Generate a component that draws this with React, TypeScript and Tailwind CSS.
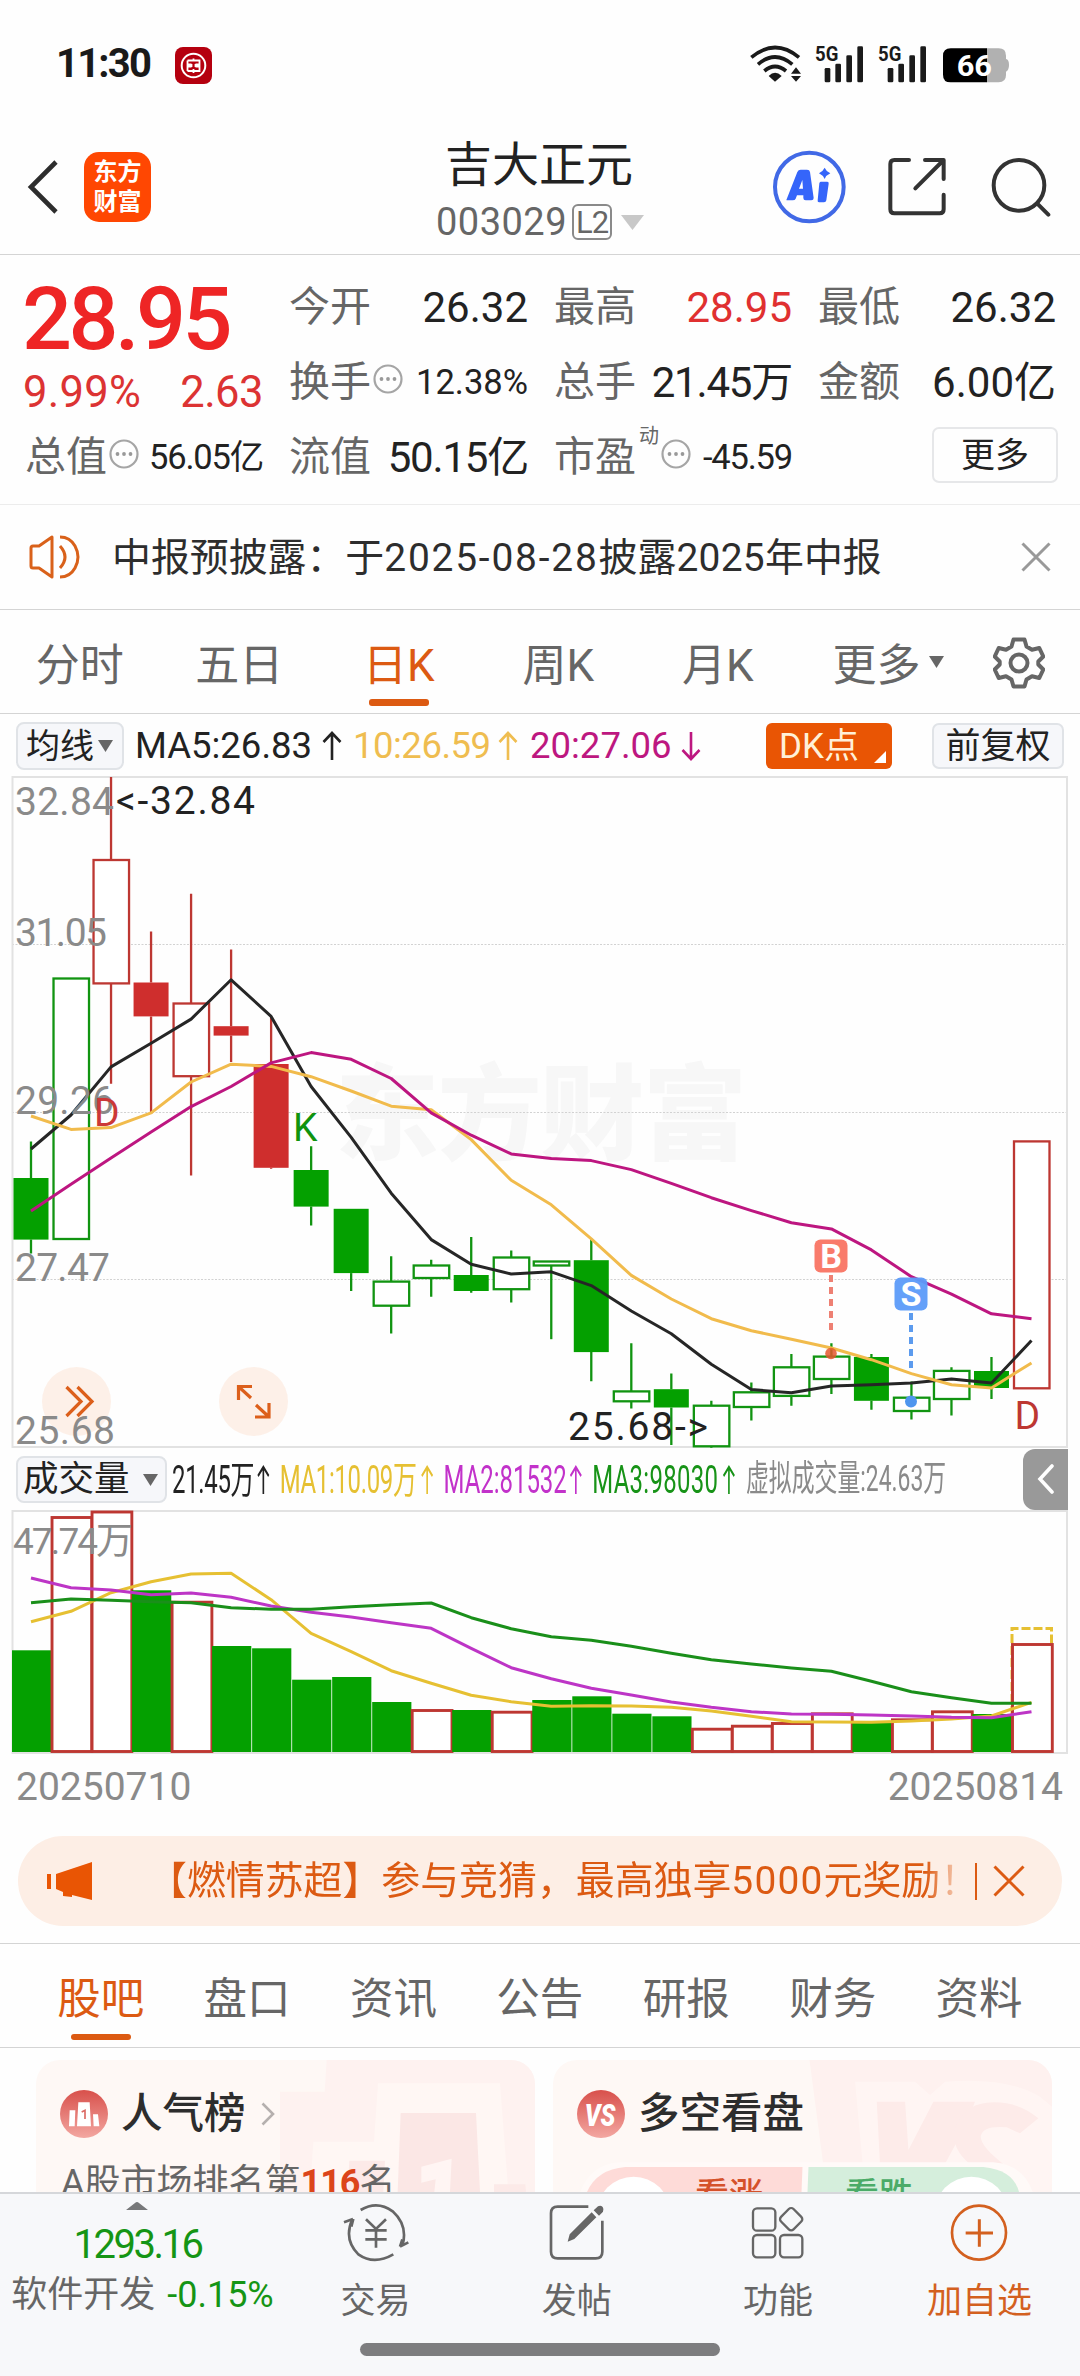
import { ReactNode } from "react";

type Candle = [high: number, top: number, bottom: number, low: number, kind: string];

// high, body top, body bottom, low ("g" green, "r" red, upper case = filled)
const candles: Candle[] = [
  [371.4, 408, 469.6, 483.5, "G"],
  [208.5, 208.5, 469, 469, "g"],
  [7, 90, 213.4, 313.8, "r"],
  [161.6, 212.5, 246.4, 344, "R"],
  [123.7, 233.5, 306.2, 405.5, "r"],
  [179.5, 256.2, 265.6, 292, "R"],
  [246.4, 294, 397.8, 398.7, "R"],
  [376.3, 400, 436.6, 455.4, "G"],
  [438.8, 438.8, 503.1, 521, "G"],
  [486.2, 511.6, 535.7, 563.4, "g"],
  [489.7, 495.5, 508, 526.8, "g"],
  [467, 505, 521, 522.8, "G"],
  [480.4, 487.5, 519.2, 532.6, "g"],
  [491.5, 491.5, 495.5, 569.2, "g"],
  [468.8, 490.2, 582.1, 611.2, "G"],
  [573.2, 621.4, 631.3, 638.4, "g"],
  [603.6, 619.2, 637.5, 675, "G"],
  [630.8, 635.7, 676.3, 677.7, "g"],
  [612.5, 622.3, 637, 650.4, "g"],
  [584, 597.3, 625.9, 635.7, "g"],
  [573.2, 586.6, 609, 624.1, "g"],
  [584, 587, 630.8, 639.7, "G"],
  [611.6, 627.7, 641, 649.6, "g"],
  [597.3, 600.9, 629, 645.5, "g"],
  [587, 601, 618, 629, "G"],
  [371.4, 371.4, 618.3, 618.3, "r"],
];
const ma5 = [379, 345, 296.9, 273.2, 249.1, 209.8, 246.4, 316.5, 367.4, 423.2, 469.6, 494.2, 504, 501.8, 515.6, 541, 563.8, 594.2, 619.6, 622.8, 616, 614.7, 613, 608.9, 613, 570.5];
const ma10 = [346, 359.4, 357.6, 342.9, 312, 294.2, 296.4, 306.7, 321, 336.2, 339.7, 369.6, 410.3, 434.8, 468.8, 505.4, 529, 548.7, 560.7, 569.2, 578, 589.7, 603.6, 614.7, 617.9, 592.9];
const ma20 = [441, 414.3, 388, 362, 336.6, 316.5, 292.9, 282.6, 289.3, 308.5, 342.9, 365.2, 383.9, 388.4, 390.6, 399.6, 413.4, 427.7, 440.6, 452.7, 458.9, 479.9, 506.7, 524.1, 543.8, 548.7];

const volumes = [140.3, 7, 1.5, 80.3, 91.7, 136, 138.3, 169.7, 167, 192, 200, 200, 201.7, 190, 186.3, 203.7, 206.3, 218.7, 215.7, 213, 203.3, 212.3, 209.3, 201.3, 204, 134];
const volumeKinds = "GrrGrGGGGGrGrGGGGrrrrGrrGr";
const vma1 = [111.7, 101.3, 82.7, 71.7, 64, 63.3, 89.7, 123.3, 141.7, 160.7, 173.3, 185.3, 191.7, 196.3, 195.7, 196, 197.3, 201, 206.3, 211.7, 212, 212.3, 211, 209, 206, 192.3];
const vma2 = [68, 77.7, 80, 84.7, 83, 87.3, 96, 102.3, 107, 112.7, 118.3, 138.3, 157.7, 168.7, 178.3, 185, 192, 197.3, 201.7, 204, 204.3, 205, 206, 207.3, 207.7, 201.7];
const vma3 = [92.7, 89, 90.3, 91.7, 92.7, 97.7, 99.3, 99.3, 96.7, 94.7, 93, 107.7, 118.7, 126.7, 130.3, 136.3, 143.3, 149.7, 154, 158, 161.3, 171.3, 181.7, 187.7, 193.3, 193.3];

const cx = (i: number) => 31 + i * 40.02;
const points = (ys: number[]) => ys.map((y, i) => `${cx(i).toFixed(1)},${y}`).join(" ");

function StatusBar() {
  return (
    <div className="flex h-[130px] items-center justify-between pb-[2px] pl-[56px] pr-[70px]">
      <div className="flex items-center">
        <span className="w-[119px] text-[40px] font-bold leading-none tracking-[-1.800px] text-[#1a1a1a]">11:30</span>
        <svg width="37" height="37" viewBox="0 0 37 37" className="mt-[2px]">
          <rect width="37" height="37" rx="8" fill="#b5000f" />
          <circle cx="18.5" cy="18.5" r="11.8" fill="none" stroke="#fff" strokeWidth="2" />
          <path d="M12.500 13.500h12v4h-4M12.500 13.500v4h4M12.500 24h12v-4.500h-4M12.500 24v-4.500h4M18.500 11.500v3M18.500 22v4M16.500 17v3M20.500 17v3" fill="none" stroke="#fff" strokeWidth="1.8" />
        </svg>
      </div>
      <svg width="260" height="38" viewBox="30 44 780 114" className="overflow-visible font-bold">
        <g fill="none" stroke="#1a1a1a" strokeWidth="11">
          <path d="M34 81Q105 22 177 81" />
          <path d="M54 102Q105 58 157 102" />
          <path d="M73 122Q105 95 138 122" />
        </g>
        <path d="M86 137Q105 117 125 137L105 154ZM153 130L168 111L183 130ZM153 137L168 154L183 137Z" fill="#1a1a1a" />
        {[0, 189].map((dx) => (
          <g key={dx} fill="#1a1a1a" transform={`translate(${dx} 0)`}>
            <text x="225" y="92" fontSize="63" textLength="70" lengthAdjust="spacingAndGlyphs">5G</text>
            <rect x="254" y="113" width="17" height="43" rx="4" />
            <rect x="286" y="100" width="17" height="56" rx="4" />
            <rect x="319" y="75" width="17" height="81" rx="4" />
            <rect x="352" y="48" width="17" height="108" rx="4" />
          </g>
        ))}
        <path d="M740 54h36q22 0 22 22v10q9 2 9 18t-9 20v10q0 22-22 22h-36z" fill="#b1b1b1" />
        <path d="M741 54H632q-23 0-23 23v56q0 23 23 23h109z" fill="#000" />
        <text x="650" y="137" fontSize="90" fill="#fff" textLength="106" lengthAdjust="spacingAndGlyphs">66</text>
      </svg>
    </div>
  );
}

function Header() {
  return (
    <header className="flex h-[125px] items-start justify-between border-b border-[#d4d4d4] pl-[27px] pr-[29px]">
      <div className="flex w-[350px] items-center pt-[22px]">
        <svg width="32" height="56" viewBox="0 0 32 56">
          <path d="M29 3L4 28L29 53" fill="none" stroke="#2d2d2d" strokeWidth="4.6" />
        </svg>
        <div className="ml-[25px] flex h-[70px] w-[67px] flex-col items-center justify-center gap-[5px] rounded-[15px] bg-[#ff4702] text-[24px] font-bold leading-[25px] text-white">
          <span>东方</span>
          <span>财富</span>
        </div>
      </div>
      <div className="flex flex-col items-center">
        <h1 className="mt-[8px] h-[54px] text-[47px] leading-[54px] text-[#222]">吉大正元</h1>
        <div className="mt-[9px] flex h-[42px] items-center gap-[5px] pl-[2px] text-[38px] leading-none text-[#666]">
          <span className="tracking-[0.5px]">003029</span>
          <span className="flex h-[36px] w-[40px] items-center justify-center rounded-[6px] border-2 border-[#8a8a8a] text-[31px] tracking-[-1px]">L2</span>
          <svg width="23" height="15" viewBox="0 0 23 15" className="ml-[4px]">
            <path d="M0 0h23L11.500 15z" fill="#c8c8c8" />
          </svg>
        </div>
      </div>
      <div className="flex w-[350px] items-center justify-end pt-[20px]">
        <svg width="74" height="74" viewBox="94 361 222 222">
          <circle cx="206" cy="472" r="103" fill="none" stroke="#4169e6" strokeWidth="12" />
          <path fillRule="evenodd" d="M137 511L170 427Q173 420 180 420H199Q207 420 208 427L219 505Q219 512 212 512H195Q188 512 188 505V497H169L165 507Q163 512 156 512H141Q137 512 137 511ZM175 477H187L185 451Z" fill="#3565fa" />
          <path d="M240 456H260Q265 456 264 462L257 512Q256 518 250 518H235Q230 518 231 512L236 461Q237 456 240 456ZM252 414Q257 426 269 431Q257 436 252 448Q246 436 235 431Q246 426 252 414Z" fill="#3565fa" />
        </svg>
        <svg width="60" height="60" viewBox="440 383 180 180" className="ml-[41px]">
          <path d="M506 392H462Q450 392 450 404V540Q450 552 462 552H598Q610 552 610 540V496M554 392H610V449M607 395L525 477" fill="none" stroke="#333" strokeWidth="12" strokeLinecap="round" strokeLinejoin="round" />
        </svg>
        <svg width="60" height="60" viewBox="752 379 180 180" className="ml-[44px]">
          <circle cx="836" cy="464" r="76" fill="none" stroke="#333" strokeWidth="12" />
          <path d="M891 519L924 552" stroke="#333" strokeWidth="12" strokeLinecap="round" />
        </svg>
      </div>
    </header>
  );
}

function InfoDot() {
  return (
    <svg width="30" height="30" viewBox="0 0 30 30" className="mb-[7px] ml-[2px] shrink-0">
      <circle cx="15" cy="15" r="13.500" fill="none" stroke="#a5a5a5" strokeWidth="2.200" />
      <circle cx="8.500" cy="15" r="1.900" fill="#999" />
      <circle cx="15" cy="15" r="1.900" fill="#999" />
      <circle cx="21.500" cy="15" r="1.900" fill="#999" />
    </svg>
  );
}

type StatProps = { label: string; value: string; info?: boolean; sup?: string; red?: boolean; tight?: boolean };

function Stat({ label, value, info, sup, red, tight }: StatProps) {
  return (
    <div className="flex h-[75px] items-center whitespace-nowrap pt-[2px] leading-none">
      <span className="text-[41px] text-[#666]">{label}</span>
      {sup && <sup className="mb-[24px] ml-[3px] text-[20px] text-[#666]">{sup}</sup>}
      {info && <InfoDot />}
      <span
        className={`ml-auto ${info ? "text-[34.500px]" : "text-[42px]"} ${tight ? "tracking-[-1.200px]" : ""} ${red ? "text-[#e03030]" : "text-[#222]"}`}
      >
        {value}
      </span>
    </div>
  );
}

function Quote() {
  return (
    <section className="grid h-[249px] grid-cols-[238px_239px_238px_238px] gap-x-[26px] px-[25px] pt-[14px]">
      <div>
        <div className="-ml-[3px] h-[92px] text-[88px] font-medium leading-[100px] tracking-[-3.500px] text-[#ee2525]">28.95</div>
        <div className="-ml-[2px] flex h-[58px] items-center justify-between pt-[6px] text-[43.500px] leading-none text-[#dc3333]">
          <span className="tracking-[0.3px]">9.99%</span>
          <span className="tracking-[-0.5px]">2.63</span>
        </div>
        <Stat label="总值" value="56.05亿" info tight />
      </div>
      <div>
        <Stat label="今开" value="26.32" />
        <Stat label="换手" value="12.38%" info />
        <Stat label="流值" value="50.15亿" tight />
      </div>
      <div>
        <Stat label="最高" value="28.95" red />
        <Stat label="总手" value="21.45万" tight />
        <Stat label="市盈" sup="动" value="-45.59" info tight />
      </div>
      <div>
        <Stat label="最低" value="26.32" />
        <Stat label="金额" value="6.00亿" />
        <div className="flex h-[72px] items-center justify-end">
          <button className="-mr-[2px] h-[56px] w-[126px] shrink-0 rounded-[7px] border-2 border-[#e6e7e9] text-[34px] leading-none text-[#222]">更多</button>
        </div>
      </div>
    </section>
  );
}

function Notice() {
  return (
    <div className="flex h-[106px] items-center border-y border-t-[#ececec] border-b-[#d4d4d4] pl-[29px] pr-[29px]">
      <svg width="52" height="46" viewBox="0 0 52 46" fill="none" stroke="#d9611a" strokeWidth="3">
        <path d="M2 14q0-2 2-2h6L23 3v40L10 34H4q-2 0-2-2z" strokeLinejoin="round" />
        <path d="M31 12q10 11 0 22M31 3q10 0 15 9q6 11 0 22q-5 9-15 9" />
      </svg>
      <p className="ml-[31px] flex pt-[2px] text-[38.900px] leading-none text-[#2d2d2d]">
        中报预披露：于<span className="tracking-[1.800px]">2025-08-28</span>披露<span className="tracking-[0.3px]">2025</span>年中报
      </p>
      <svg width="30" height="30" viewBox="0 0 30 30" className="ml-auto">
        <path d="M1.500 1.500l27 27M28.500 1.500l-27 27" stroke="#999" strokeWidth="3" />
      </svg>
    </div>
  );
}

function PeriodTabs() {
  return (
    <div className="flex h-[104px] items-start border-b border-[#d4d4d4] text-[44px] leading-none text-[#666]">
      {["分时", "五日", "日K", "周K", "月K"].map((t) => (
        <div key={t} className={`flex w-[159.500px] flex-col items-center pt-[34px] ${t === "日K" ? "text-[#dc5a12]" : ""}`}>
          <span>{t}</span>
          {t === "日K" && <span className="mt-[11px] h-[7px] w-[60px] rounded-[3px] bg-[#dc5a12]" />}
        </div>
      ))}
      <span className="ml-[35px] mt-[34px]">更多</span>
      <svg width="15" height="12" viewBox="0 0 15 12" className="ml-[8px] mt-[46px]">
        <path d="M0 0h15L7.500 12z" fill="#666" />
      </svg>
      <svg width="52" height="52" viewBox="0 0 52 52" className="ml-[49px] mt-[27px]" fill="none" stroke="#666" strokeWidth="4">
        <path d="M20.500 2.500h11l2 7l5.500 3.300l7.300-1.800l4 8.500l-5 5v3l5 5l-4 8.500l-7.300-1.800l-5.500 3.300l-2 7h-11l-2-7l-5.500-3.300l-7.300 1.800l-4-8.500l5-5v-3l-5-5l4-8.500l7.300 1.800l5.500-3.300z" strokeLinejoin="round" />
        <circle cx="26" cy="26" r="8.500" />
      </svg>
    </div>
  );
}

function Arrow({ down, className }: { down?: boolean; className?: string }) {
  return (
    <svg width="20" height="30" viewBox="0 0 20 30" className={className} fill="none" stroke="currentColor" strokeWidth="2.600">
      <path d={down ? "M10 1v27M1.500 19L10 28L18.500 19" : "M10 29V2M1.500 11L10 2L18.500 11"} />
    </svg>
  );
}

function MaRow() {
  return (
    <div className="flex h-[62px] items-center whitespace-nowrap pl-[16px] pr-[16px] pt-[1px] text-[36.500px] leading-none">
      <div className="flex h-[48px] w-[108px] items-center rounded-[8px] border-2 border-[#e0e3e7] bg-[#f6f7fa] pl-[8px] pt-[1px] text-[34px] text-[#222]">
        均线
        <svg width="15" height="12" viewBox="0 0 15 12" className="ml-[4px]">
          <path d="M0 0h15L7.500 12z" fill="#666" />
        </svg>
      </div>
      <span className="ml-[11px] w-[187px] pt-[2px] text-[#222]">MA5:26.83</span>
      <Arrow className="text-[#222]" />
      <span className="ml-[11px] w-[145px] pt-[2px] tracking-[-0.5px] text-[#efbd50]">10:26.59</span>
      <Arrow className="text-[#efbd50]" />
      <span className="ml-[12px] w-[151px] pt-[2px] text-[#bd1780]">20:27.06</span>
      <Arrow down className="text-[#bd1780]" />
      <div className="relative ml-auto flex h-[46px] w-[126px] items-center rounded-[6px] bg-[#e95504] pl-[13px] pt-[2px] text-[35px] text-[#fff0d8]">
        DK点
        <svg width="12" height="12" viewBox="0 0 12 12" className="absolute bottom-[6px] right-[6px]">
          <path d="M12 0v12H0z" fill="#fff" />
        </svg>
      </div>
      <div className="ml-[40px] flex h-[46px] w-[132px] items-center justify-center rounded-[7px] border-2 border-[#e0e3e7] bg-[#f6f7fa] pt-[1px] text-[35px] text-[#222]">前复权</div>
    </div>
  );
}

function KLineChart() {
  return (
    <svg width="1080" height="672" viewBox="0 6 1080 672" className="block shrink-0">
      <text x="335" y="382" fontSize="104" fontWeight="900" fill="#f7f7f7" textLength="412">东方财富</text>
      <g stroke="#d2d2d2" strokeWidth="1" strokeDasharray="2 1.500">
        <path d="M12 174.500H1067M12 342.500H1067M12 509.500H1067" />
      </g>
      <rect x="12.500" y="7" width="1054.500" height="670" fill="none" stroke="#e2e2e2" strokeWidth="2" />
      {candles.map(([high, top, bottom, low, kind], i) => {
        const color = kind.toLowerCase() === "g" ? "#119411" : "#bd3732";
        const filled = kind === "G" || kind === "R";
        return (
          <g key={i} stroke={color} strokeWidth="2.300">
            <path d={`M${cx(i)} ${high}V${top}M${cx(i)} ${bottom}V${low}`} />
            {filled ? (
              <rect x={cx(i) - 17.5} y={top} width="35" height={bottom - top} fill={kind === "G" ? "#04a000" : "#cf2e2d"} stroke="none" />
            ) : (
              <rect x={cx(i) - 17.5} y={top} width="35.500" height={bottom - top} fill="#fff" />
            )}
          </g>
        );
      })}
      <g fill="none" strokeWidth="3" strokeLinejoin="round">
        <polyline points={points(ma5)} stroke="#262626" />
        <polyline points={points(ma10)} stroke="#f1bb4c" />
        <polyline points={points(ma20)} stroke="#bd1680" />
      </g>
      <circle cx="76.500" cy="631.500" r="34.500" fill="#fdefe7" fillOpacity="0.95" />
      <circle cx="253.500" cy="631.500" r="34.500" fill="#fdefe7" fillOpacity="0.95" />
      <g fill="none" stroke="#dc5f1b" strokeWidth="3.200">
        <path d="M66.500 617L81 631.500L66.500 646M77.500 617L92 631.500L77.500 646" />
        <path d="M252 616.500H238.500V630M239 617L251 628M256 635L268.500 646.500M255 647H269V633" />
      </g>
      <g fontSize="39" fill="#8a8a8a">
        <text x="15" y="45" textLength="99">32.84</text>
        <text x="15" y="176" textLength="92">31.05</text>
        <text x="15" y="343.500" textLength="99">29.26</text>
        <text x="15" y="510.500" textLength="95">27.47</text>
        <text x="15" y="674" textLength="100">25.68</text>
      </g>
      <g fontSize="39" fill="#222">
        <text x="116" y="43.500" textLength="139">&lt;-32.84</text>
        <text x="568" y="669.500" textLength="140">25.68-&gt;</text>
      </g>
      <g fontSize="39">
        <text x="94" y="356" fill="#cc3838">D</text>
        <text x="293" y="371" fill="#0f930f">K</text>
        <text x="1014.500" y="658.500" fill="#bd3732">D</text>
      </g>
      <g strokeWidth="4" strokeDasharray="7 5">
        <path d="M831 505V562" stroke="#ee8073" />
        <path d="M911 543V600" stroke="#5c9bee" />
      </g>
      <rect x="814.500" y="469.500" width="33" height="33" rx="6" fill="#f97b6b" />
      <rect x="894.500" y="507.500" width="33" height="33" rx="6" fill="#5c9bf9" fillOpacity="0.95" />
      <g fontSize="34" fontWeight="700" fill="#fff" textAnchor="middle">
        <text x="831" y="498">B</text>
        <text x="911" y="536">S</text>
      </g>
      <circle cx="831" cy="583.500" r="5.800" fill="#e4572e" fillOpacity="0.85" />
      <circle cx="911" cy="631.500" r="6" fill="#4f96ee" />
    </svg>
  );
}

function VolumeRow() {
  return (
    <div className="flex h-[62px] items-center pl-[16px] leading-none">
      <div className="flex h-[47px] w-[151px] shrink-0 items-center justify-between rounded-[8px] border-2 border-[#e0e3e7] bg-[#f6f7fa] pl-[5px] pr-[7px] pt-[1px] text-[35.500px] text-[#222]">
        成交量
        <svg width="15" height="12" viewBox="0 0 15 12">
          <path d="M0 0h15L7.500 12z" fill="#666" />
        </svg>
      </div>
      <div className="ml-[5px] w-[800px] shrink-0">
        <div className="flex w-[1240px] origin-left scale-x-[0.63] items-center whitespace-nowrap pt-[1px] text-[38px]">
          <span className="w-[133px] tracking-[-0.5px] text-[#222]">21.45万</span>
          <Arrow className="w-[24px] text-[#222]" />
          <span className="ml-[14px] w-[222px] tracking-[-0.5px] text-[#e6c032]">MA1:10.09万</span>
          <Arrow className="w-[24px] text-[#e6c032]" />
          <span className="ml-[14px] w-[198px] text-[#c232ca]">MA2:81532</span>
          <Arrow className="w-[24px] text-[#c232ca]" />
          <span className="ml-[14px] w-[205px] tracking-[0.5px] text-[#179317]">MA3:98030</span>
          <Arrow className="w-[24px] text-[#179317]" />
          <span className="ml-[15px] text-[36.300px] text-[#8a8a8a]">虚拟成交量:24.63万</span>
        </div>
      </div>
      <div className="ml-auto mr-[12px] flex h-[61px] w-[45px] shrink-0 items-center justify-center rounded-l-[12px] bg-[#999]">
        <svg width="17" height="30" viewBox="0 0 17 30">
          <path d="M15 2L3 15L15 28" fill="none" stroke="#fff" strokeWidth="3.600" strokeLinecap="round" />
        </svg>
      </div>
    </div>
  );
}

function VolumeChart() {
  return (
    <svg width="1080" height="246" viewBox="0 0 1080 246" className="block shrink-0">
      <rect x="12.500" y="1" width="1054.500" height="242" fill="none" stroke="#e2e2e2" strokeWidth="2" />
      <path d="M1012 241V118.500H1051.500V241" fill="none" stroke="#e6c032" strokeWidth="3" strokeDasharray="9 3" />
      {volumes.map((top, i) => {
        const x = 12 + i * 40.02;
        return volumeKinds[i] === "G" ? (
          <rect key={i} x={x} y={top} width="39.200" height={242 - top} fill="#04a000" />
        ) : (
          <rect key={i} x={x} y={top + 0.5} width="39.800" height={241 - top} fill="#fff" stroke="#bd3732" strokeWidth="2.900" />
        );
      })}
      <g fill="none" strokeWidth="3" strokeLinejoin="round">
        <polyline points={points(vma1)} stroke="#e6c032" />
        <polyline points={points(vma2)} stroke="#bd35c6" />
        <polyline points={points(vma3)} stroke="#1a8f1a" />
      </g>
      <text x="13" y="44" fontSize="37" fill="#8a8a8a" textLength="120">47.74万</text>
    </svg>
  );
}

function Banner() {
  return (
    <div className="mx-[18px] flex h-[90px] shrink-0 items-center rounded-[45px] bg-[#fdeee5] text-[#dc5a12]">
      <svg width="46" height="40" viewBox="0 0 46 40" className="ml-[29px]" fill="#e95504">
        <path d="M0 13h4v15H0zM9 13L45 1v38l-20-5v2l-9-1v-4L9 28z" />
      </svg>
      <p className="ml-[55px] h-[44px] w-[827px] overflow-hidden whitespace-nowrap text-[38.900px] leading-[44px] [mask-image:linear-gradient(to_right,black_94%,transparent_99%)]">
        【燃情苏超】参与竞猜，最高独享<span className="tracking-[1.200px]">5000</span>元奖励！
      </p>
      <span className="h-[37px] w-[1.500px] bg-[#dc5a12]" />
      <svg width="32" height="32" viewBox="0 0 32 32" className="ml-[16px]">
        <path d="M1.500 1.500l29 29M30.500 1.500l-29 29" stroke="#dc5a12" strokeWidth="3" />
      </svg>
    </div>
  );
}

function SectionTabs() {
  return (
    <div className="mt-[17px] flex h-[105px] shrink-0 border-y border-[#d4d4d4] pl-[27.500px] text-[43.500px] leading-none text-[#666]">
      {["股吧", "盘口", "资讯", "公告", "研报", "财务", "资料"].map((t, i) => (
        <div key={t} className={`flex w-[146.400px] flex-col items-center pt-[34px] ${i === 0 ? "text-[#dc5a12]" : ""}`}>
          <span>{t}</span>
          {i === 0 && <span className="mt-[12px] h-[6px] w-[60px] rounded-[3px] bg-[#dc5a12]" />}
        </div>
      ))}
    </div>
  );
}

function Card({ icon, title, art, children }: { icon: ReactNode; title: ReactNode; art: ReactNode; children: ReactNode }) {
  return (
    <div className="relative h-[200px] w-[499px] overflow-hidden rounded-[24px] bg-[#fef8f5]">
      {art}
      <div className="relative flex items-center pl-[24px] pt-[30px] text-[41.500px] font-medium leading-[48px] text-[#2d2d2d]">
        {icon}
        {title}
      </div>
      {children}
    </div>
  );
}

function Cards() {
  return (
    <section className="flex h-[144px] shrink-0 gap-[18px] overflow-hidden pl-[36px] pt-[12px]">
      <Card
        icon={
          <svg width="48" height="48" viewBox="120 119 144 144">
            <defs>
              <linearGradient id="badge" x1="0" y1="0" x2="0" y2="1">
                <stop offset="0" stopColor="#d8504b" />
                <stop offset="1" stopColor="#f3a7a1" />
              </linearGradient>
            </defs>
            <circle cx="192" cy="191" r="72" fill="url(#badge)" />
            <path d="M149 180h17l-2 48h-17zM175 156h34l4 72h-42zM219 192h15l4 36h-17z" fill="#fff" />
            <path d="M185 185l10-5v26" fill="none" stroke="#dc6a64" strokeWidth="5" />
          </svg>
        }
        title={
          <>
            <span className="ml-[13px]">人气榜</span>
            <svg width="14" height="24" viewBox="0 0 14 24" className="ml-[15px]">
              <path d="M1.500 1.500L12 12L1.500 22.500" fill="none" stroke="#b5b0ae" strokeWidth="2.600" />
            </svg>
          </>
        }
        art={
          <svg width="499" height="132" viewBox="48 30 1497 396" className="absolute left-0 top-0">
            <path d="M920 30H1545V426H780V125H914z" fill="#fef2f0" />
            <path d="M880 275H1062L1074 100H1440L1465 426H870z" fill="#fff7f4" />
            <path d="M1142 189H1368L1380 426H1133z" fill="#fbe7e5" />
            <path d="M988 332H1095L1090 426H982zM1422 403H1516L1518 426H1422z" fill="#fceae8" />
            <path d="M1204 350L1295 326L1290 426H1243L1247 388L1204 398z" fill="#fff5f3" />
          </svg>
        }
      >
        <p className="relative mt-[22px] whitespace-nowrap pl-[25px] text-[36px] leading-[46px] text-[#666]">
          A股市场排名第<b className="tracking-[-1px] text-[#dc451a]">116</b>名
        </p>
      </Card>
      <Card
        icon={
          <svg width="48" height="48" viewBox="111 119 144 144">
            <circle cx="183" cy="191" r="72" fill="url(#badge)" />
            <text x="134" y="226" fontSize="94" fontWeight="900" fontStyle="italic" fill="#fff" textLength="92" lengthAdjust="spacingAndGlyphs">VS</text>
          </svg>
        }
        title={<span className="ml-[13px]">多空看盘</span>}
        art={
          <svg width="499" height="132" viewBox="38 30 1498 396" className="absolute left-0 top-0">
            <path d="M808 30H1536V426H860z" fill="#fef1ef" />
            <path d="M945 95H1125L1170 135L1215 95Q1400 80 1500 140L1536 170V426H975z" fill="#fff5f3" />
            <path d="M1010 155H1095L1105 300L1180 155H1305L1270 240L1210 350H1020z" fill="#fdebe9" />
            <path d="M1495 205Q1430 150 1340 158Q1270 165 1245 235Q1230 300 1300 350H1400Q1320 290 1322 258Q1330 225 1400 232L1440 250z" fill="#fdebe9" />
            <path d="M235 337H1360Q1450 345 1478 426H120Q150 345 235 337z" fill="#fffaf8" />
            <path d="M255 351H787L784 426H140Q170 358 255 351z" fill="#fedbd8" />
            <path d="M805 351H1330Q1420 360 1437 426H802z" fill="#d5eedc" />
            <circle cx="280" cy="490" r="110" fill="#fff" />
            <circle cx="1294" cy="490" r="110" fill="#fff" />
          </svg>
        }
      >
        <div className="relative mt-[37px] flex gap-[82px] pl-[142px] text-[34px] font-medium leading-[40px]">
          <span className="text-[#d5512a]">看涨</span>
          <span className="text-[#4bab68]">看跌</span>
        </div>
      </Card>
    </section>
  );
}

function NavItem({ label, children, active }: { label: string; children: ReactNode; active?: boolean }) {
  return (
    <div className={`flex w-[201.300px] flex-col items-center pt-[9px] ${active ? "text-[#d3601f]" : "text-[#666]"}`}>
      {children}
      <span className="mt-[19px] text-[35px] leading-[40px]">{label}</span>
    </div>
  );
}

function BottomNav() {
  return (
    <nav className="h-[184px] shrink-0 border-t-2 border-[#d5d7da] bg-[#f7f8fa]">
      <div className="flex h-[145px] leading-none">
        <div className="flex w-[275px] flex-col items-center pt-[8px]">
          <svg width="22" height="8" viewBox="0 0 22 8">
            <path d="M0 8L9 1q2-2 4 0l9 7z" fill="#77787a" />
          </svg>
          <span className="mt-[15px] text-[40px] tracking-[-2.500px] text-[#159515]">1293.16</span>
          <div className="mt-[8px] flex items-center whitespace-nowrap pl-[10px] text-[36px] leading-[44px] text-[#666]">
            软件开发<span className="ml-[12px] text-[36px] text-[#159515]">-0.15%</span>
          </div>
        </div>
        <NavItem label="交易">
          <svg width="68" height="60" viewBox="964 457 204 180" fill="none" stroke="#666" strokeWidth="8">
            <path d="M1020 478Q1070 448 1116 482Q1162 524 1146 582M1118 611Q1060 644 1013 611Q968 566 995 506" />
            <path d="M970 515L997 505M1138 588L1163 575M1138 588L1145 566M998 505L992 528" />
            <path d="M1036 506L1066 535L1096 506M1034 539H1098M1034 566H1098M1066 535V591" />
          </svg>
        </NavItem>
        <NavItem label="发帖">
          <svg width="60" height="60" viewBox="22 457 180 180">
            <path d="M146 468H54Q34 468 34 488V603Q34 623 54 623H168Q188 623 188 603V510" fill="none" stroke="#666" strokeWidth="8" />
            <path d="M84 573L90 551L156 485L170 500L104 565zM162 479L175 467Q183 463 189 469Q194 477 190 483L178 495z" fill="#666" />
          </svg>
        </NavItem>
        <NavItem label="功能">
          <svg width="60" height="60" viewBox="626 457 180 180" fill="none" stroke="#666" strokeWidth="7">
            <rect x="641" y="473" width="67" height="67" rx="12" />
            <rect x="641" y="553" width="67" height="67" rx="12" />
            <rect x="722" y="553" width="67" height="67" rx="12" />
            <rect x="729" y="479" width="53" height="53" rx="10" transform="rotate(45 755.5 505.5)" />
          </svg>
        </NavItem>
        <NavItem label="加自选" active>
          <svg width="60" height="60" viewBox="1227 457 180 180" fill="none" stroke="#d3601f">
            <circle cx="1317" cy="546" r="81" strokeWidth="8" />
            <path d="M1277 547H1359M1318 506V588" strokeWidth="9" />
          </svg>
        </NavItem>
      </div>
      <div className="mx-auto mt-[4px] h-[13px] w-[360px] rounded-full bg-[#7d7d7f]" />
    </nav>
  );
}

export default function App() {
  return (
    <div className="flex h-[2376px] w-[1080px] flex-col overflow-hidden bg-[#fefefe] font-[family-name:Roboto,'Noto_Sans_CJK_SC',sans-serif]">
      <StatusBar />
      <Header />
      <Quote />
      <Notice />
      <PeriodTabs />
      <MaRow />
      <KLineChart />
      <VolumeRow />
      <VolumeChart />
      <div className="flex h-[80px] shrink-0 items-start justify-between pl-[16px] pr-[17px] pt-[10px] text-[39px] leading-[42px] text-[#8a8a8a]">
        <span>20250710</span>
        <span>20250814</span>
      </div>
      <Banner />
      <SectionTabs />
      <Cards />
      <BottomNav />
    </div>
  );
}
